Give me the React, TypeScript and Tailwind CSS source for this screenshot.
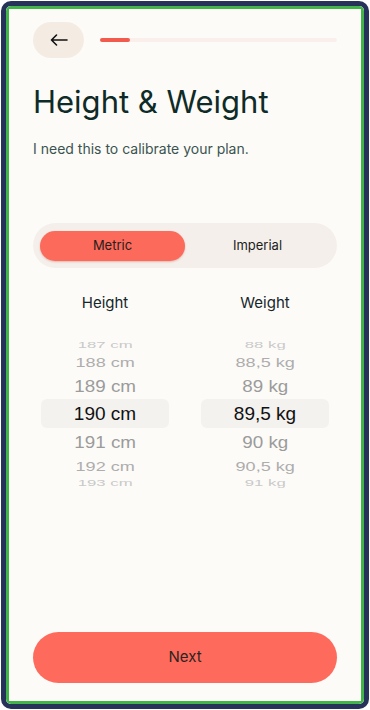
import React from "react";

const ui = { fontFamily: "Inter, 'Noto Sans', sans-serif" };
const pick = { fontFamily: "'Liberation Sans', Arial, sans-serif" };

function Wheel({ items }: { items: string[] }) {
  const cfg = [
    { c: "#c9c9c9", sx: 0.88, sy: 0.45, h: 11 },
    { c: "#adadad", sx: 0.95, sy: 0.72, h: 23 },
    { c: "#9b9b9b", sx: 0.99, sy: 0.87, h: 25 },
    { c: "#111111", sx: 1, sy: 1, h: 29 },
    { c: "#9b9b9b", sx: 0.99, sy: 0.87, h: 29 },
    { c: "#adadad", sx: 0.95, sy: 0.72, h: 19 },
    { c: "#c9c9c9", sx: 0.88, sy: 0.45, h: 15 },
  ];
  return (
    <div className="flex flex-col items-stretch px-2" style={pick}>
      {items.map((t, i) => {
        const s = cfg[i];
        return (
          <div
            key={t}
            className={
              "flex items-center justify-center " +
              (i === 3 ? "rounded-md bg-[#f4f2ef]" : "")
            }
            style={{ height: s.h }}
          >
            <span
              className="text-[19px] leading-none whitespace-nowrap"
              style={{ color: s.c, transform: `scale(${s.sx}, ${s.sy})` }}
            >
              {t}
            </span>
          </div>
        );
      })}
    </div>
  );
}

export default function App() {
  return (
    <div className="w-[370px] h-[710px] p-[1px] bg-white">
      <div className="w-full h-full rounded-[10px] border-[5px] border-[#26325a] overflow-hidden">
        <div className="w-full h-full border-[3px] border-[#42b54a] bg-[#fdfbf8] flex flex-col px-6" style={ui}>
          <div className="flex items-center gap-4 pt-[13px]">
            <div className="w-[51px] h-[36px] rounded-full bg-[#f4ece3] flex items-center justify-center">
              <svg width="18" height="12" viewBox="0 0 18 12" fill="none">
                <path d="M17 6H1.5M6.5 1L1.5 6l5 5" stroke="#111" strokeWidth="1.6" strokeLinecap="round" strokeLinejoin="round" />
              </svg>
            </div>
            <div className="flex-1 h-[4px] rounded-full bg-[#fbefeb] flex">
              <div className="w-[30px] h-full rounded-full bg-[#f25a4d]" />
            </div>
          </div>

          <h1 className="mt-[26px] text-[31px] leading-[36px] font-normal text-[#0e2b27]">
            Height &amp; Weight
          </h1>
          <p className="mt-[19px] text-[14px] leading-[20px] text-[#3a5450]">
            I need this to calibrate your plan.
          </p>

          <div className="mt-[64px] h-[45px] rounded-full bg-[#f4efea] flex items-center px-[7px]">
            <div className="w-[145px] h-[30px] rounded-full bg-[#fc6a5c] shadow-[0_1px_2px_rgba(180,60,40,0.3)] flex items-center justify-center text-[13px] text-[#2a1d1b]">
              Metric
            </div>
            <div className="flex-1 flex items-center justify-center text-[13px] text-[#1d1d1d]">
              Imperial
            </div>
          </div>

          <div className="mt-[24px] grid grid-cols-2 gap-4">
            <div className="text-center text-[15px] text-[#15262a]">Height</div>
            <div className="text-center text-[15px] text-[#15262a]">Weight</div>
          </div>

          <div className="mt-[25px] grid grid-cols-2 gap-4">
            <Wheel items={["187 cm", "188 cm", "189 cm", "190 cm", "191 cm", "192 cm", "193 cm"]} />
            <Wheel items={["88 kg", "88,5 kg", "89 kg", "89,5 kg", "90 kg", "90,5 kg", "91 kg"]} />
          </div>

          <div className="flex-1" />
          <button className="mb-[18px] h-[51px] rounded-full bg-[#fe6b5d] text-[15px] text-[#2b2422]">
            Next
          </button>
        </div>
      </div>
    </div>
  );
}
